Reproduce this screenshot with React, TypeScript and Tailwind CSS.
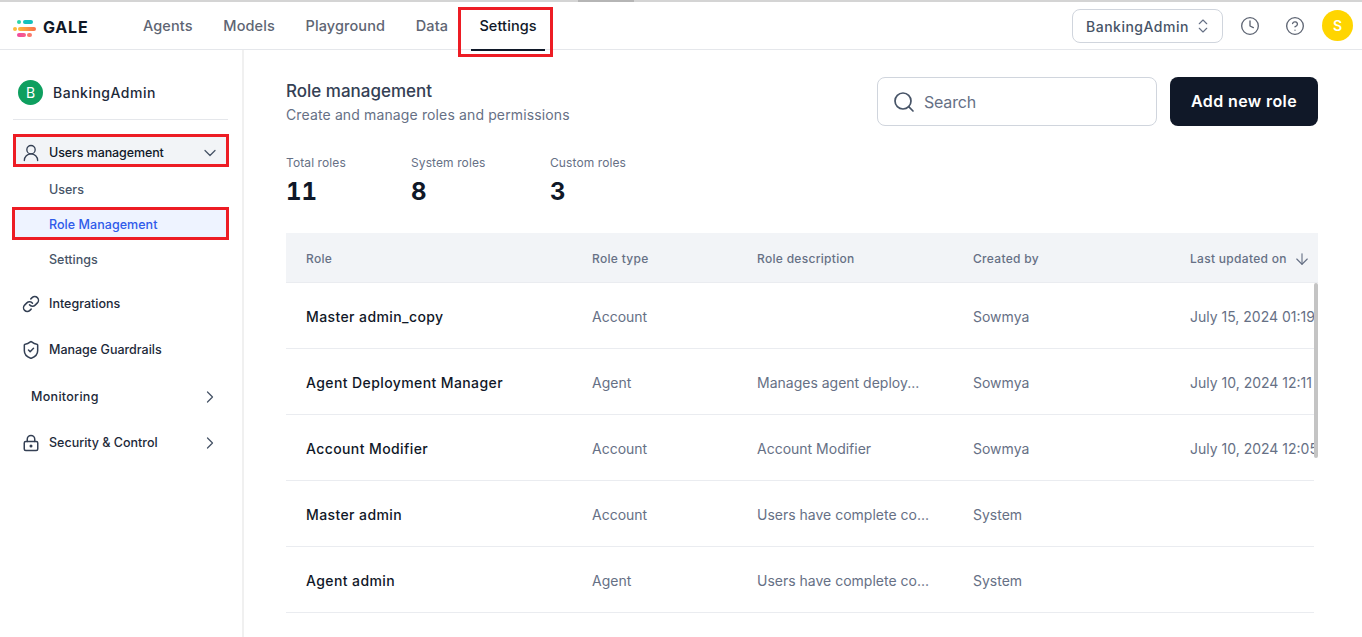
import { ChevronDown, ChevronRight, ChevronsUpDown, Clock, CircleHelp, UserRound, Link, ShieldCheck, LockKeyhole, Search, ArrowDown } from "lucide-react";

function Nav({ label, active }: { label: string; active?: boolean }) {
  return (
    <div className={active ? "relative flex h-full w-[74px] items-center justify-center text-[#101828]" : "flex h-full items-center text-[#5e6573]"}>
      <span>{label}</span>
      {active && <span className="absolute bottom-[-2px] left-0 right-0 h-[2px] bg-[#101828]" />}
    </div>
  );
}

function Logo() {
  return (
    <svg width="23" height="17" viewBox="0 0 23 17" className="mt-[6px] shrink-0">
      <defs>
        <linearGradient id="g" x1="0" x2="1" y1="0" y2="0">
          <stop offset="0" stopColor="#fdba3c" />
          <stop offset="1" stopColor="#fb6f4c" />
        </linearGradient>
        <linearGradient id="p" x1="0" x2="1" y1="0" y2="0">
          <stop offset="0" stopColor="#f0479f" />
          <stop offset="1" stopColor="#f8608a" />
        </linearGradient>
      </defs>
      <rect x="4" y="0" width="4" height="4" rx="2" fill="#2dd4a8" />
      <rect x="10" y="0" width="10" height="4" rx="2" fill="#14c0bd" />
      <rect x="0" y="7" width="4" height="4" rx="2" fill="#fdba3c" />
      <rect x="5" y="7" width="18" height="4" rx="2" fill="url(#g)" />
      <rect x="4" y="13" width="9" height="4" rx="2" fill="url(#p)" />
      <rect x="14" y="13" width="5" height="4" rx="2" fill="#fb7a6c" />
    </svg>
  );
}

const rows = [
  ["Master admin_copy", "Account", "", "Sowmya", "July 15, 2024 01:19 PM"],
  ["Agent Deployment Manager", "Agent", "Manages agent deploy...", "Sowmya", "July 10, 2024 12:11 PM"],
  ["Account Modifier", "Account", "Account Modifier", "Sowmya", "July 10, 2024 12:05 PM"],
  ["Master admin", "Account", "Users have complete co...", "System", ""],
  ["Agent admin", "Agent", "Users have complete co...", "System", ""],
];

function Stat({ label, value, w }: { label: string; value: string; w: string }) {
  return (
    <div className={w}>
      <div className="text-[12px] leading-[16px] tracking-[0.1px] text-[#667085]">{label}</div>
      <div className="mt-[5px] text-[24px] font-bold leading-[32px] text-[#101828] tabular-nums">{value}</div>
    </div>
  );
}

export default function App() {
  return (
    <div className="relative h-[637px] w-[1362px] overflow-hidden bg-white font-['Inter',sans-serif]">
      <div className="relative h-[2px] bg-[#d4d4d4]">
        <div className="absolute left-[578px] top-0 h-[2px] w-[56px] bg-[#b5b5b5]" />
      </div>
      <header className="flex h-[48px] items-center border-b border-[#e5e7eb] pl-[13px] pr-[9px]">
        <Logo />
        <span className="ml-[7px] mt-[3px] w-[54px] text-[16px] font-bold tracking-[0.8px] text-[#101828]">GALE</span>
        <nav className="ml-[46px] flex h-full gap-[30.7px] text-[14.5px] font-medium tracking-[0.1px]">
          <Nav label="Agents" />
          <Nav label="Models" />
          <Nav label="Playground" />
          <Nav label="Data" />
        </nav>
        <div className="ml-[23px] mr-auto h-full text-[14.5px] font-medium tracking-[0.1px]">
          <Nav label="Settings" active />
        </div>
        <div className="flex h-[34px] w-[151px] items-center justify-between rounded-[8px] border border-[#d0d5dd] pl-[13px] pr-[10px] pt-[1px] text-[14px] font-medium tracking-[0.5px] text-[#475467]">
          <span>BankingAdmin</span>
          <ChevronsUpDown size={18} strokeWidth={1.5} className="text-[#667085]" />
        </div>
        <Clock size={20} strokeWidth={1.6} className="ml-[17px] text-[#5e6573]" />
        <CircleHelp size={20} strokeWidth={1.6} className="ml-[25px] text-[#5e6573]" />
        <div className="ml-[17px] flex h-[31px] w-[31px] items-center justify-center rounded-full bg-[#ffd500] text-[14px] font-semibold text-white">S</div>
      </header>

      <div className="flex h-[587px]">
        <aside className="w-[244px] shrink-0 border-r-2 border-[#f0f0f0] pl-[12px] pr-[13px]">
          <div className="mx-[1px] flex h-[70px] items-center gap-[10px] border-b border-[#e5e7eb] pl-[5px] pt-[15px]">
            <div className="flex h-[25px] w-[25px] items-center justify-center rounded-full bg-[#0e9f5f] text-[14px] text-white">B</div>
            <span className="text-[14px] font-medium tracking-[0.5px] text-[#1d2939]">BankingAdmin</span>
          </div>
          <div className="ml-[1px] mt-[14px] flex h-[33px] items-center border-[3px] border-[#ed1c24] bg-[#f2f4f7] pl-[5px] pr-[6px] pt-[5px] text-[12.5px] font-medium tracking-[-0.1px] text-[#101828]">
            <UserRound size={20} strokeWidth={1.6} className="text-[#344054]" />
            <span className="ml-[8px] flex-1">Users management</span>
            <ChevronDown size={20} strokeWidth={1.5} className="text-[#475467]" />
          </div>
          <div className="mt-[5px] flex h-[35px] items-center pl-[37px] pt-[2px] text-[12.5px] font-medium text-[#475467]">Users</div>
          <div className="flex h-[33px] items-center border-[3px] border-[#ed1c24] bg-[#eef3ff] pl-[34px] pt-[4px] text-[12.5px] font-medium tracking-[0.05px] text-[#2f5bea]">Role Management</div>
          <div className="mt-[1px] flex h-[35px] items-center pl-[37px] pt-[4px] text-[12.5px] font-medium text-[#475467]">Settings</div>
          <div className="mt-[4px] flex h-[46px] items-center pl-[10px] pt-[2px] text-[12.5px] font-medium text-[#1d2939]">
            <Link size={18} strokeWidth={2} className="text-[#344054]" />
            <span className="ml-[9px]">Integrations</span>
          </div>
          <div className="flex h-[46px] items-center pl-[9px] pt-[2px] text-[12.5px] font-medium text-[#1d2939]">
            <ShieldCheck size={20} strokeWidth={1.8} className="text-[#344054]" />
            <span className="ml-[8px]">Manage Guardrails</span>
          </div>
          <div className="flex h-[47px] items-center justify-between pl-[19px] pr-[9px] pt-[3px] text-[12.5px] font-medium tracking-[0.3px] text-[#1d2939]">
            <span>Monitoring</span>
            <ChevronRight size={20} strokeWidth={1.5} className="text-[#475467]" />
          </div>
          <div className="flex h-[46px] items-center pl-[10px] pr-[9px] pt-[2px] text-[12.5px] font-medium text-[#1d2939]">
            <LockKeyhole size={18} strokeWidth={2} className="text-[#344054]" />
            <span className="ml-[9px] flex-1">Security &amp; Control</span>
            <ChevronRight size={20} strokeWidth={1.5} className="text-[#475467]" />
          </div>
        </aside>

        <main className="relative min-w-0 flex-1 pl-[42px] pr-[44px]">
          <div className="flex pt-[27px]">
            <div className="flex-1 pt-[3px]">
              <div className="text-[17px] font-medium leading-[22px] text-[#344054]">Role management</div>
              <div className="mt-[3px] text-[14px] leading-[20px] tracking-[0.13px] text-[#667085]">Create and manage roles and permissions</div>
            </div>
            <div className="flex h-[49px] w-[280px] items-center rounded-[8px] border border-[#d0d5dd] pl-[14px]">
              <Search size={24} strokeWidth={1.7} className="text-[#475467]" />
              <span className="ml-[8px] text-[16px] tracking-[-0.2px] text-[#667085]">Search</span>
            </div>
            <div className="ml-[13px] flex h-[49px] w-[148px] items-center justify-center rounded-[8px] bg-[#101828] pb-[1px] text-[16px] font-semibold tracking-[0.4px] text-white">Add new role</div>
          </div>

          <div className="mt-[29px] flex">
            <Stat label="Total roles" value="11" w="w-[125px]" />
            <Stat label="System roles" value="8" w="w-[139px]" />
            <Stat label="Custom roles" value="3" w="w-[120px]" />
          </div>

          <div className="mt-[25px] flex h-[50px] items-center border-b border-[#eaecf0] bg-[#f2f4f7] pl-[20px] pt-[3px] text-[12px] font-medium tracking-[0.3px] text-[#667085]">
            <div className="w-[286px]">Role</div>
            <div className="w-[165px]">Role type</div>
            <div className="w-[216px]">Role description</div>
            <div className="w-[217px]">Created by</div>
            <div className="flex items-center gap-[6px]">Last updated on <ArrowDown size={18} strokeWidth={1.5} /></div>
          </div>
          <div className="relative h-[330px] overflow-hidden pr-[4px]">
            {rows.map((r) => (
              <div key={r[0]} className="flex h-[66px] items-center border-b border-[#eaecf0] pl-[20px] pt-[2px] text-[14px] text-[#667085]">
                <div className="w-[286px] shrink-0 font-medium tracking-[0.4px] text-[#101828]">{r[0]}</div>
                <div className="w-[165px] shrink-0">{r[1]}</div>
                <div className="w-[216px] shrink-0">{r[2]}</div>
                <div className="w-[217px] shrink-0">{r[3]}</div>
                <div className="shrink-0 whitespace-nowrap">{r[4]}</div>
              </div>
            ))}
            <div className="absolute right-0 top-0 h-[175px] w-[4px] rounded-[2px] bg-[#c4c4c4]" />
          </div>
        </main>
      </div>

      <div className="pointer-events-none absolute left-[458px] top-[7px] h-[50px] w-[95px] border-[3px] border-[#ed1c24]" />
    </div>
  );
}
